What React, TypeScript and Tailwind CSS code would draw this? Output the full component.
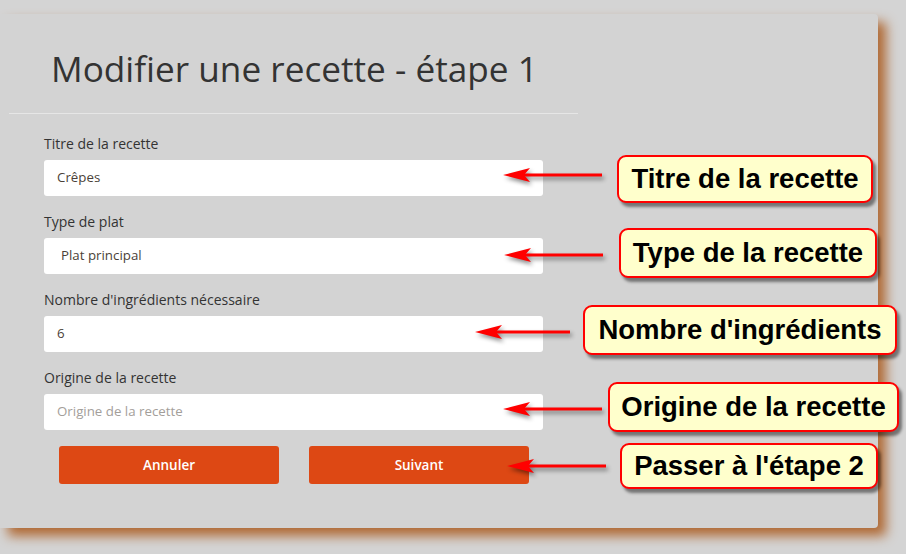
import React from 'react';

const fields = [
  { label: 'Titre de la recette', value: 'Crêpes', pad: 'pl-[13px]' },
  { label: 'Type de plat', value: 'Plat principal', pad: 'pl-[17px]' },
  { label: "Nombre d'ingrédients nécessaire", value: '6', pad: 'pl-[13px]' },
  { label: 'Origine de la recette', value: '', placeholder: 'Origine de la recette', pad: 'pl-[13px]' },
];

const callouts = [
  { text: 'Titre de la recette', box: 'left-[617px] top-[155px] w-[256px] h-[48px]', tip: 503, tail: 602, y: 175 },
  { text: 'Type de la recette', box: 'left-[619px] top-[228px] w-[258px] h-[50px]', tip: 504, tail: 603, y: 255 },
  { text: "Nombre d'ingrédients", box: 'left-[583px] top-[305px] w-[314px] h-[50px]', tip: 475, tail: 570, y: 332 },
  { text: 'Origine de la recette', box: 'left-[608px] top-[382px] w-[291px] h-[50px]', tip: 503, tail: 602, y: 409 },
  { text: "Passer à l'étape 2", box: 'left-[620px] top-[443px] w-[258px] h-[46px]', tip: 507, tail: 606, y: 466 },
];

function Arrow({ tip, tail, y }: { tip: number; tail: number; y: number }) {
  return (
    <g>
      <line x1={tip + 20} y1={y} x2={tail} y2={y} stroke="#ff0000" strokeWidth="3" />
      <path
        d={`M ${tip} ${y} L ${tip + 27} ${y - 7} L ${tip + 21} ${y} L ${tip + 27} ${y + 7} Z`}
        fill="#ff0000"
      />
    </g>
  );
}

export default function App() {
  return (
    <div className="relative w-[906px] h-[554px] overflow-hidden bg-[#d4d4d4] pt-[14px]" style={{ fontFamily: '"Open Sans", "Noto Sans", sans-serif' }}>
      <div className="w-[878px] h-[514px] bg-[#d3d3d3] rounded-r-[4px] shadow-[8px_8px_12px_#b06a35]">
        <h1 className="pt-[32px] pl-[51px] text-[35.2px] leading-[44px] text-[#333333] font-normal">
          Modifier une recette - étape 1
        </h1>
        <div className="mt-[23px] ml-[9px] w-[569px] h-px bg-[#e6e6e6]" />
        <div className="pl-[44px] pt-[20px] w-[543px] flex flex-col">
          {fields.map((f) => (
            <div key={f.label} className="flex flex-col mb-[16px]">
              <label className="h-[20px] leading-[20px] text-[14px] text-[#333333]">{f.label}</label>
              <div className={`mt-[6px] h-[36px] w-[499px] bg-white rounded-[3px] flex items-center ${f.pad} text-[13.3px]`}>
                {f.value ? (
                  <span className="text-[#4a3f38]">{f.value}</span>
                ) : (
                  <span className="text-[#a39e9a]">{f.placeholder}</span>
                )}
              </div>
            </div>
          ))}
          <div className="flex gap-[30px] pl-[15px]">
            <button className="w-[220px] h-[38px] rounded-[3px] bg-[#dd4814] text-white text-[13.5px] font-semibold">
              Annuler
            </button>
            <button className="w-[220px] h-[38px] rounded-[3px] bg-[#dd4814] text-white text-[13.5px] font-semibold">
              Suivant
            </button>
          </div>
        </div>
      </div>

      <svg className="absolute left-0 top-0" width="906" height="554" style={{ filter: 'drop-shadow(2px 3px 2px rgba(0,0,0,0.45))' }}>
        {callouts.map((c) => (
          <Arrow key={c.text} tip={c.tip} tail={c.tail} y={c.y} />
        ))}
      </svg>

      {callouts.map((c) => (
        <div
          key={c.text}
          className={`absolute ${c.box} flex items-center justify-center rounded-[9px] border-2 border-[#ff0000] bg-[#ffffcc] shadow-[3px_4px_3px_rgba(0,0,0,0.45)] text-[27.5px] font-bold text-black`}
          style={{ fontFamily: '"Liberation Sans", Arial, sans-serif' }}
        >
          {c.text}
        </div>
      ))}
    </div>
  );
}
